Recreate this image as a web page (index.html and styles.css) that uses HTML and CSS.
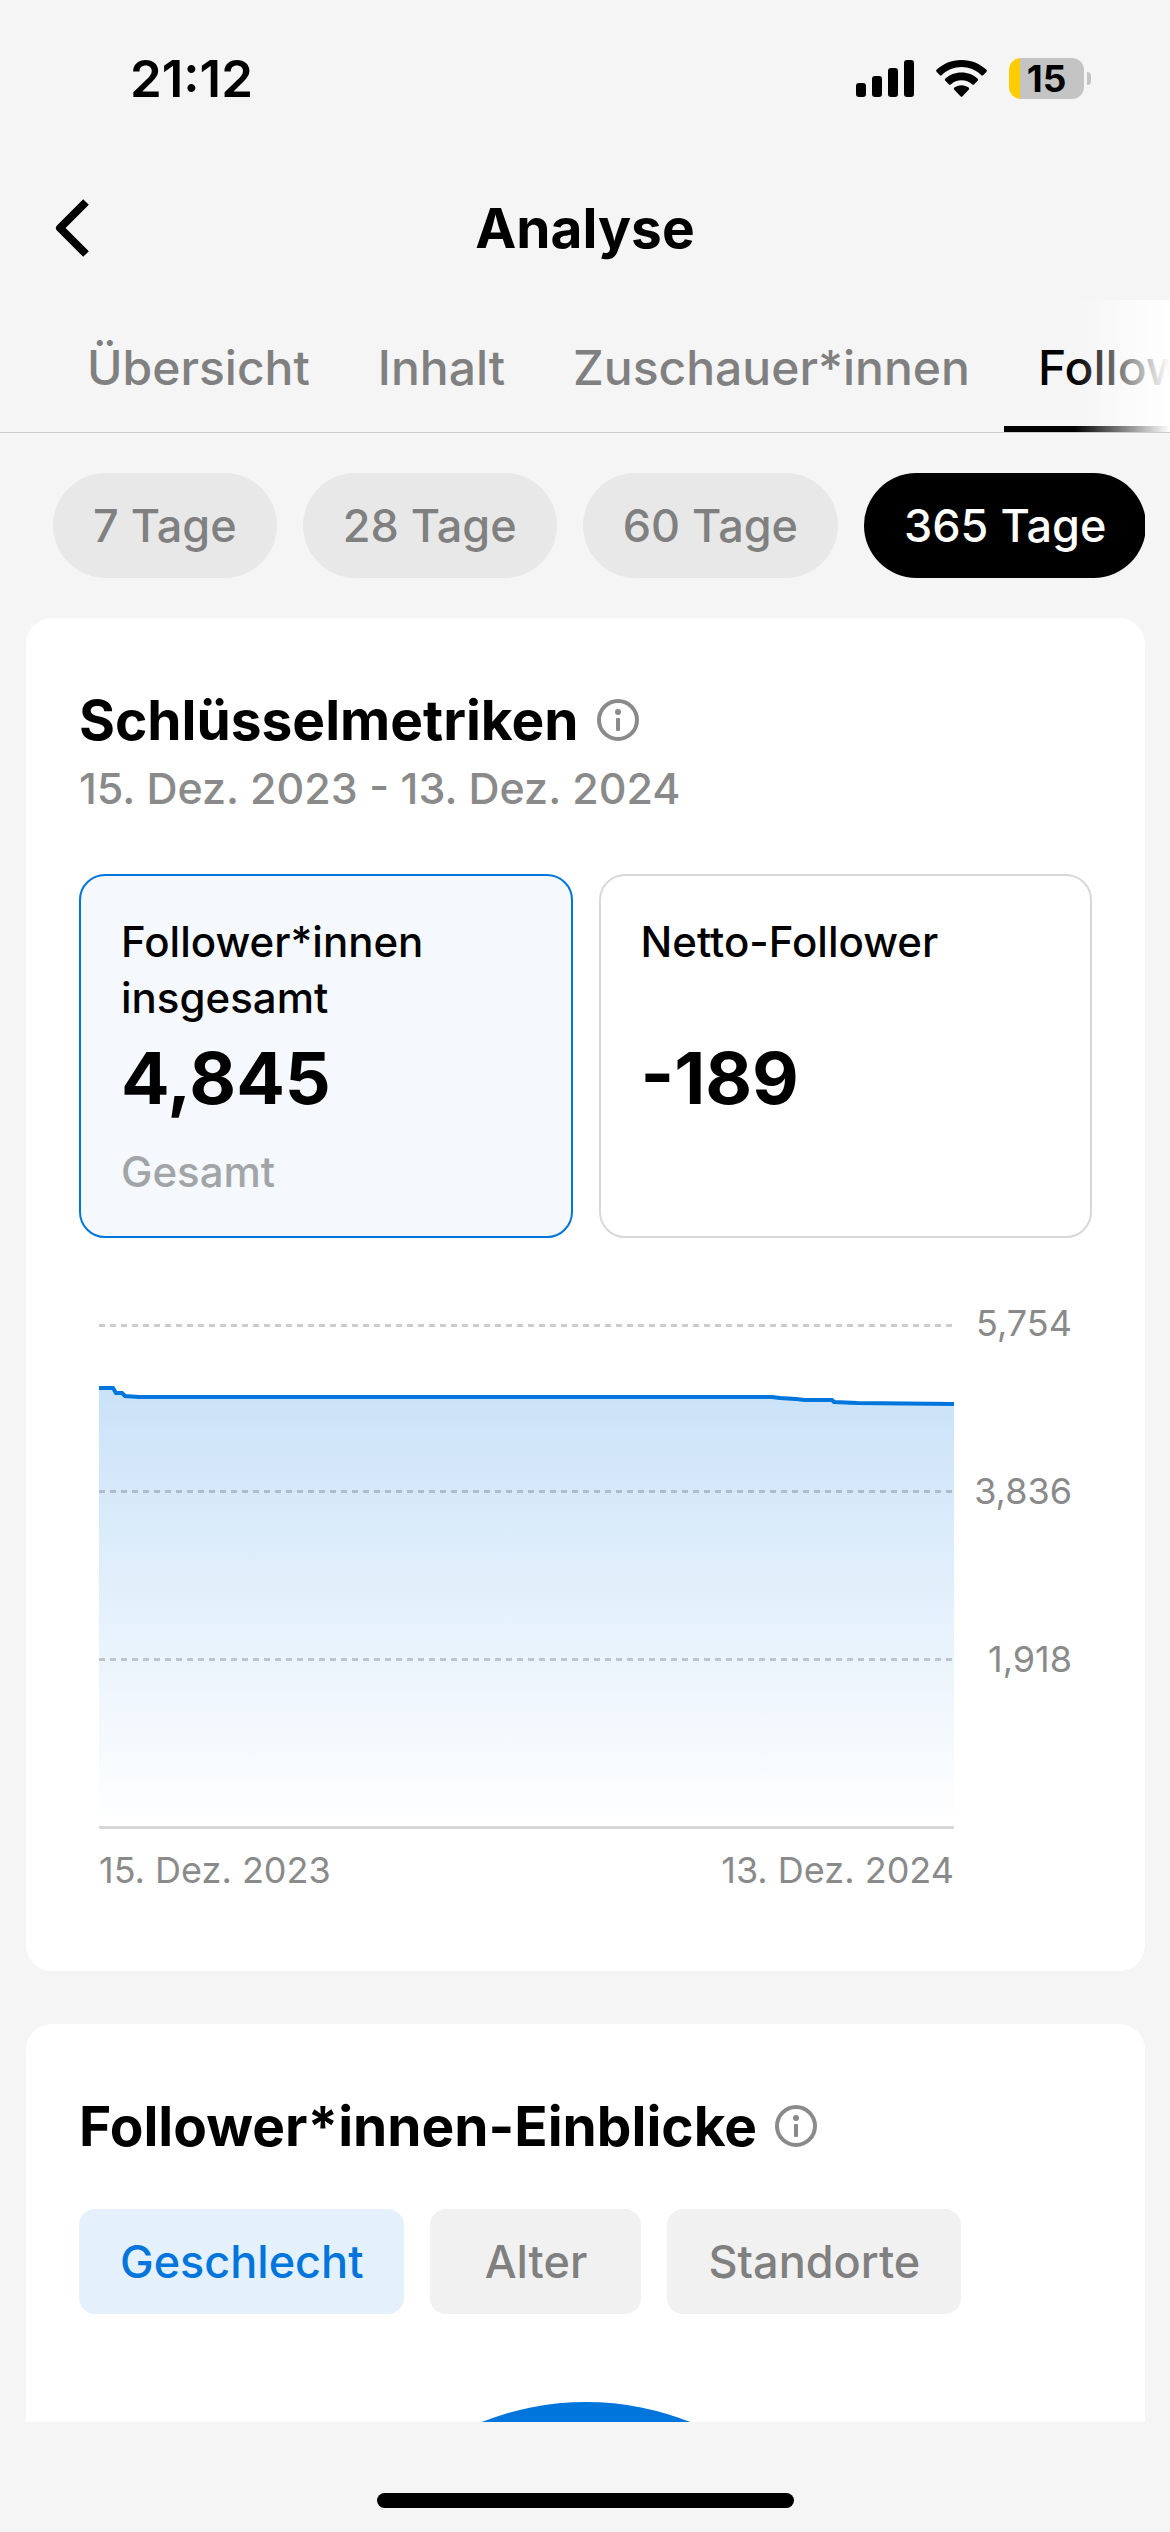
FILE: index.html
```html
<!DOCTYPE html>
<html lang="de">
<head>
  <meta charset="UTF-8" />
  <meta name="viewport" content="width=device-width, initial-scale=1" />
  <title>Analyse</title>
  <link rel="stylesheet" href="styles.css">
</head>
<body>
  <div class="status-bar">
    <span class="time">21:12</span>
    <div class="status-icons">
      <svg class="signal" viewBox="0 0 58 37">
        <rect x="0" y="23" width="10" height="14" rx="3" />
        <rect x="16" y="16" width="10" height="21" rx="3" />
        <rect x="32" y="8" width="10" height="29" rx="3" />
        <rect x="48" y="0" width="10" height="37" rx="3" />
      </svg>
      <svg class="wifi" viewBox="0 0 51 37">
        <path d="M25.500 0C35.500 0 44 3.800 50.200 9.600c.8.800.8 1.600.1 2.300l-3 3c-.7.700-1.500.7-2.200 0C39.700 9.800 33 7 25.500 7S11.300 9.800 5.900 14.900c-.7.700-1.500.7-2.200 0l-3-3c-.7-.7-.7-1.500.1-2.300C7 3.800 15.500 0 25.500 0z" />
        <path d="M25.500 12.500c6.500 0 12 2.300 16 6.100.8.700.8 1.500.1 2.200l-3.400 3.400c-.7.700-1.400.7-2.200 0-2.800-2.600-6.400-4-10.500-4s-7.700 1.400-10.500 4c-.8.700-1.500.7-2.200 0l-3.400-3.400c-.7-.7-.7-1.500.1-2.200 4-3.800 9.500-6.100 16-6.100z" />
        <path d="M25.500 25.200c2.900 0 5.200.9 7.100 2.400.8.700.8 1.400.1 2.100l-6.200 6.500c-.6.700-1.400.7-2 0l-6.200-6.500c-.7-.7-.7-1.400.1-2.100 1.900-1.500 4.200-2.400 7.100-2.400z" />
      </svg>
      <div class="battery">
        <span class="battery-body">15</span>
        <span class="battery-cap"></span>
      </div>
    </div>
  </div>

  <header class="nav">
    <button class="back" aria-label="Zurück">
      <svg viewBox="0 0 34 58" fill="none" stroke="currentColor" stroke-width="8" stroke-linejoin="round">
        <path d="M31 3L5 29l26 26" />
      </svg>
    </button>
    <h1>Analyse</h1>
  </header>

  <nav class="tabs">
    <a href="#uebersicht">Übersicht</a>
    <a href="#inhalt">Inhalt</a>
    <a href="#zuschauer">Zuschauer*innen</a>
    <a href="#follower" class="active">Follower*innen</a>
  </nav>

  <main>
    <div class="ranges">
      <button class="chip">7 Tage</button>
      <button class="chip">28 Tage</button>
      <button class="chip">60 Tage</button>
      <button class="chip active">365 Tage</button>
    </div>

    <section class="card">
      <h2>
        Schlüsselmetriken
        <svg class="info" viewBox="0 0 42 42">
          <circle cx="21" cy="21" r="19" fill="none" stroke="currentColor" stroke-width="4" />
          <circle cx="21" cy="13" r="3" fill="currentColor" />
          <rect x="19" y="19" width="4" height="13" rx="1" fill="currentColor" />
        </svg>
      </h2>
      <p class="period">15. Dez. 2023 - 13. Dez. 2024</p>

      <div class="metrics">
        <button class="metric active">
          <span class="metric-label">Follower*innen insgesamt</span>
          <span class="metric-value">4,845</span>
          <span class="metric-note">Gesamt</span>
        </button>
        <button class="metric">
          <span class="metric-label">Netto-Follower</span>
          <span class="metric-value">-189</span>
        </button>
      </div>

      <div class="chart">
        <svg class="plot" viewBox="0 0 855 528">
          <defs>
            <linearGradient id="area" x1="0" y1="0" x2="0" y2="1">
              <stop offset="0" stop-color="#0075dc" stop-opacity="0.21" />
              <stop offset="1" stop-color="#0075dc" stop-opacity="0" />
            </linearGradient>
          </defs>
          <g class="grid-lines">
            <path d="M0 24.500H855" />
            <path d="M0 190.500H855" />
            <path d="M0 358.500H855" />
          </g>
          <path fill="url(#area)" d="M0 87H14L17 92H23L26 95L40 96H673L697 98L706 99H733L735 101L758 102L855 103V526H0z" />
          <path class="line" d="M0 87H14L17 92H23L26 95L40 96H673L681 97L697 98L706 99H733L735 101L758 102L855 103" />
          <path class="axis" d="M0 526.500H855" />
        </svg>
        <div class="y-labels">
          <span>5,754</span>
          <span>3,836</span>
          <span>1,918</span>
        </div>
        <div class="x-labels">
          <span>15. Dez. 2023</span>
          <span>13. Dez. 2024</span>
        </div>
      </div>
    </section>

    <section class="card">
      <h2>
        Follower*innen-Einblicke
        <svg class="info" viewBox="0 0 42 42">
          <circle cx="21" cy="21" r="19" fill="none" stroke="currentColor" stroke-width="4" />
          <circle cx="21" cy="13" r="3" fill="currentColor" />
          <rect x="19" y="19" width="4" height="13" rx="1" fill="currentColor" />
        </svg>
      </h2>
      <div class="segments">
        <button class="segment active">Geschlecht</button>
        <button class="segment">Alter</button>
        <button class="segment">Standorte</button>
      </div>
      <svg class="pie" viewBox="0 0 564 564">
        <circle cx="282" cy="282" r="282" />
      </svg>
    </section>
  </main>

  <footer class="home">
    <div class="home-indicator"></div>
  </footer>
</body>
</html>
```
FILE: styles.css
```css
:root {
  --bg: #f5f5f5;
  --card: #ffffff;
  --text: #000000;
  --muted: #808080;
  --label: #8a8a8a;
  --chip: #e8e8e8;
  --accent: #0075dc;
}

* {
  margin: 0;
  padding: 0;
  box-sizing: border-box;
}

body {
  font-family: Inter, "Liberation Sans", sans-serif;
  background: var(--bg);
  color: var(--text);
  height: 100vh;
  display: flex;
  flex-direction: column;
  overflow: hidden;
}

button {
  font: inherit;
  color: inherit;
  border: none;
  background: none;
  cursor: pointer;
}

/* Status bar */
.status-bar {
  height: 156px;
  padding: 0 79px 0 130px;
  display: flex;
  align-items: center;
  justify-content: space-between;
  flex-shrink: 0;
}

.time {
  font-size: 51px;
  font-weight: 600;
}

.status-icons {
  display: flex;
  align-items: center;
  gap: 22px;
}

.signal {
  width: 58px;
  height: 37px;
}

.wifi {
  width: 51px;
  height: 37px;
}

.battery {
  display: flex;
  align-items: center;
  gap: 3px;
}

.battery-body {
  width: 75px;
  height: 41px;
  border-radius: 12px;
  background: linear-gradient(to right, #ffcc00 11px, #c4c4c4 11px);
  font-size: 37px;
  font-weight: 700;
  line-height: 41px;
  text-align: center;
}

.battery-cap {
  width: 4px;
  height: 13px;
  border-radius: 0 4px 4px 0;
  background: #c4c4c4;
}

/* Navigation */
.nav {
  height: 144px;
  padding: 0 55px;
  display: grid;
  grid-template-columns: 80px 1fr 80px;
  align-items: center;
  flex-shrink: 0;
}

.back {
  height: 80px;
  display: flex;
  align-items: center;
}

.back svg {
  width: 34px;
  height: 58px;
}

h1 {
  font-size: 55px;
  font-weight: 700;
  text-align: center;
}

.tabs {
  position: relative;
  display: flex;
  flex-shrink: 0;
  height: 133px;
  padding-left: 53px;
  overflow: hidden;
  border-bottom: 1px solid #cccccc;
}

.tabs a {
  flex-shrink: 0;
  padding: 0 34px;
  font-size: 48px;
  font-weight: 500;
  line-height: 136px;
  color: var(--muted);
  text-decoration: none;
}

.tabs a.active {
  color: var(--text);
  border-bottom: 6px solid var(--text);
}

/* Fade at the scrolling edge */
.tabs::after {
  content: "";
  position: absolute;
  top: 0;
  right: 0;
  bottom: 0;
  width: 96px;
  background: linear-gradient(to right, rgba(255, 255, 255, 0), #ffffff);
}

main {
  flex: 1;
  min-height: 0;
  padding: 0 25px 0 26px;
  overflow: hidden;
}

/* Date ranges */
.ranges {
  display: flex;
  gap: 26px;
  padding: 40px 0 40px 27px;
  overflow: hidden;
}

.chip {
  flex-shrink: 0;
  height: 105px;
  padding: 0 40px;
  border-radius: 53px;
  background: var(--chip);
  color: var(--muted);
  font-size: 45px;
  font-weight: 500;
}

.chip.active {
  background: var(--text);
  color: #ffffff;
}

/* Cards */
.card {
  background: var(--card);
  border-radius: 26px;
  padding: 70px 53px 77px;
  margin-bottom: 53px;
}

h2 {
  display: flex;
  align-items: center;
  gap: 18px;
  font-size: 55px;
  font-weight: 700;
  line-height: 64px;
}

.info {
  width: 42px;
  height: 42px;
  color: var(--label);
}

.period {
  margin-top: 8px;
  color: var(--label);
  font-size: 43px;
  font-weight: 500;
  line-height: 56px;
}

.metrics {
  display: grid;
  grid-template-columns: 1fr 1fr;
  gap: 26px;
  margin-top: 58px;
}

.metric {
  display: flex;
  flex-direction: column;
  border: 2px solid #d8d8d8;
  border-radius: 26px;
  padding: 38px 40px 36px;
  text-align: left;
}

.metric.active {
  border-color: var(--accent);
  background: #f5f9fe;
}

.metric-label {
  min-height: 112px;
  font-size: 42px;
  font-weight: 500;
  line-height: 56px;
}

.metric-value {
  margin-top: 8px;
  font-size: 72px;
  font-weight: 700;
  line-height: 88px;
}

.metric-note {
  margin-top: 22px;
  color: #a2a5a7;
  font-size: 42px;
  font-weight: 500;
  line-height: 56px;
}

/* Chart */
.chart {
  display: grid;
  grid-template-columns: 1fr 118px;
  margin-top: 63px;
  padding: 0 20px;
  color: var(--label);
  font-size: 36px;
}

.plot {
  width: 100%;
}

.grid-lines {
  stroke: #000000;
  stroke-opacity: 0.2;
  stroke-width: 3;
  stroke-dasharray: 6 5;
}

.line {
  fill: none;
  stroke: var(--accent);
  stroke-width: 4;
}

.axis {
  stroke: #d8d8d8;
  stroke-width: 3;
}

.y-labels {
  display: grid;
  grid-auto-rows: 168px;
  line-height: 44px;
  text-align: right;
}

.x-labels {
  display: flex;
  justify-content: space-between;
  margin-top: 17px;
  line-height: 48px;
}

/* Insights */
.segments {
  display: flex;
  gap: 26px;
  margin-top: 51px;
}

.segment {
  min-width: 211px;
  height: 105px;
  padding: 0 41px;
  border-radius: 16px;
  background: #f1f1f1;
  color: var(--muted);
  font-size: 45px;
  font-weight: 500;
}

.segment.active {
  background: #e4f1fc;
  color: var(--accent);
}

.pie {
  display: block;
  width: 564px;
  margin: 88px auto 0;
  fill: var(--accent);
}

/* Home indicator */
.home {
  height: 110px;
  padding-bottom: 24px;
  display: flex;
  align-items: flex-end;
  justify-content: center;
  flex-shrink: 0;
}

.home-indicator {
  width: 417px;
  height: 15px;
  border-radius: 8px;
  background: var(--text);
}
```
